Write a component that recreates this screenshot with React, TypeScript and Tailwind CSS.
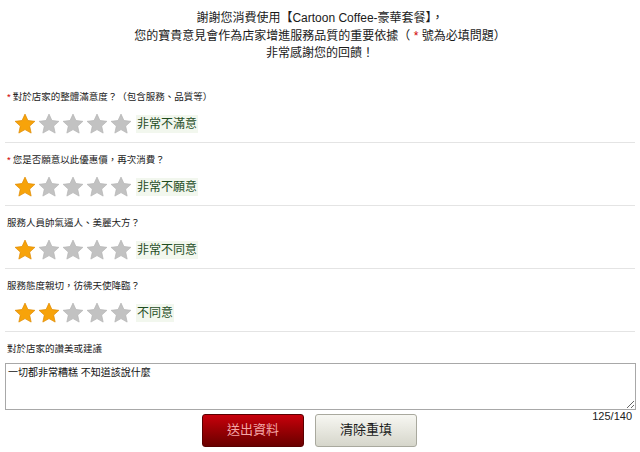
import React from "react";

const FONT = { fontFamily: '"Liberation Sans", "Noto Sans CJK TC", sans-serif' };

function Star({ on }: { on: boolean }) {
  return (
    <svg width="22" height="22" viewBox="0 0 24 24" className="block">
      <polygon
        points="12,1.2 15.2,8.2 22.8,9.1 17.1,14.3 18.7,21.9 12,18.1 5.3,21.9 6.9,14.3 1.2,9.1 8.8,8.2"
        fill={on ? "#f7a30a" : "#c2c2c2"}
        stroke={on ? "#e08a00" : "#b5b5b5"}
        strokeWidth="0.8"
        strokeLinejoin="round"
      />
    </svg>
  );
}

type Q = { req: boolean; text: string; n: number; label: string };

const questions: Q[] = [
  { req: true, text: "對於店家的整體滿意度？（包含服務、品質等）", n: 1, label: "非常不滿意" },
  { req: true, text: "您是否願意以此優惠價，再次消費？", n: 1, label: "非常不願意" },
  { req: false, text: "服務人員帥氣逼人、美麗大方？", n: 1, label: "非常不同意" },
  { req: false, text: "服務態度親切，彷彿天使降臨？", n: 2, label: "不同意" },
];

export default function App() {
  return (
    <div className="w-[640px] h-[452px] bg-white overflow-hidden text-[#222]" style={FONT}>
      <div className="pt-[10px] text-center text-[12px] leading-[17.5px] text-[#1a1a1a]">
        <div>謝謝您消費使用【Cartoon Coffee-豪華套餐】，</div>
        <div>
          您的寶貴意見會作為店家增進服務品質的重要依據（ <span className="text-[#d00000]">*</span> 號為必填問題）
        </div>
        <div>非常感謝您的回饋！</div>
      </div>

      <div className="px-[5px] mt-[27px]">
        {questions.map((q, i) => (
          <div
            key={i}
            className={`border-b border-[#e4e4e4] pb-[6px] ${i === 0 ? "pt-[0px]" : "pt-[10px]"}`}
          >
            <div className="pl-[2px] text-[9.5px] leading-[14px] text-[#222]">
              {q.req && <span className="text-[#d00000] mr-[2px]">*</span>}
              {q.text}
            </div>
            <div className="mt-[8px] pl-[9px] flex items-center h-[24px]">
              <div className="flex gap-[2px]">
                {[0, 1, 2, 3, 4].map((s) => (
                  <Star key={s} on={s < q.n} />
                ))}
              </div>
              <span className="ml-[4px] px-[1px] bg-[#f2f7ee] text-[12px] leading-[18px] text-[#1f4d1f]">
                {q.label}
              </span>
            </div>
          </div>
        ))}

        <div className="pt-[10px]">
          <div className="pl-[2px] text-[9.5px] leading-[14px] text-[#222]">對於店家的讚美或建議</div>
          <textarea
            readOnly
            defaultValue="一切都非常糟糕 不知道該說什麼"
            className="mt-[7px] block w-[631px] h-[47px] border border-[#a8a8a8] px-[2px] py-[2px] text-[10px] leading-[13px] text-[#111] outline-none"
            style={FONT}
          />
          <div className="flex items-start">
            <div className="ml-[197px] mt-[4px] flex gap-[11px]">
              <button className="w-[102px] h-[33px] rounded-[3px] border border-[#5a0000] bg-gradient-to-b from-[#c8000c] to-[#6a0000] text-[13px] text-[#f3a7a7]">
                送出資料
              </button>
              <button className="w-[102px] h-[33px] rounded-[3px] border border-[#a9a99e] bg-gradient-to-b from-[#f7f7f2] to-[#d6d6cb] text-[13px] text-[#1a1a1a]">
                清除重填
              </button>
            </div>
            <div className="ml-auto mr-[3px] text-[11px] leading-[13px] text-[#222]">125/140</div>
          </div>
        </div>
      </div>
    </div>
  );
}
